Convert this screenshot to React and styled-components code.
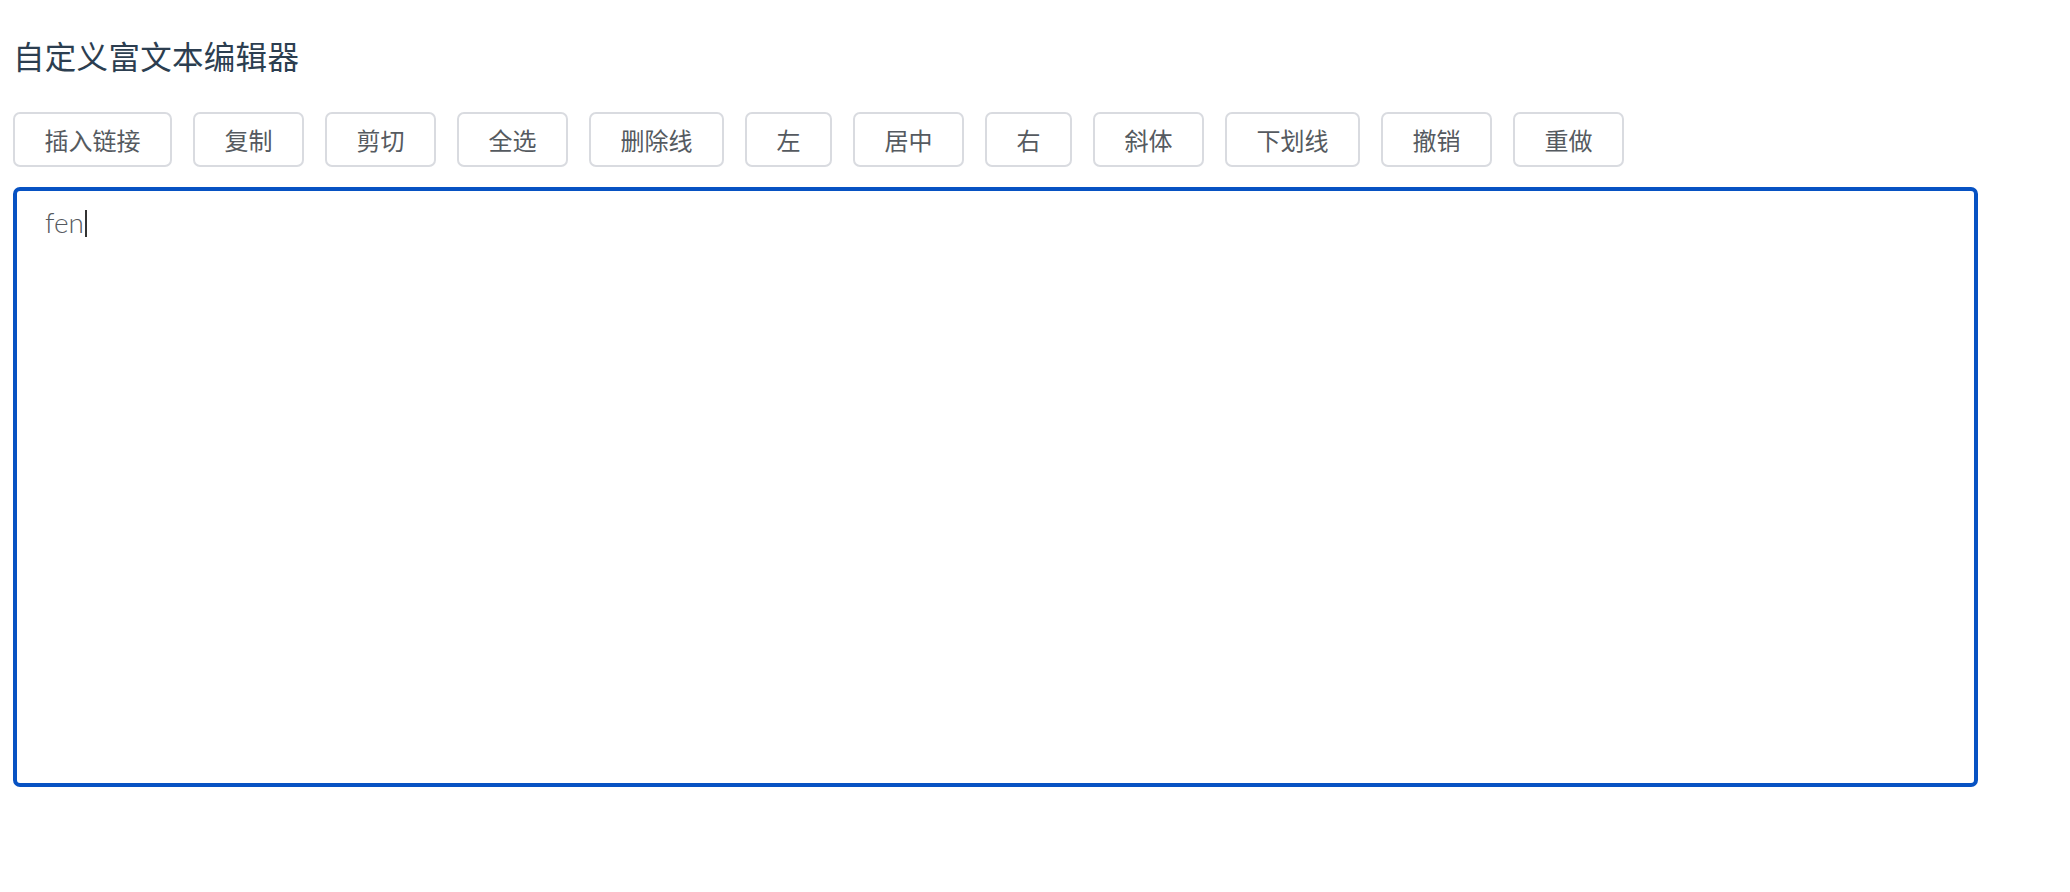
import React from "react";
import styled, { createGlobalStyle } from "styled-components";

const GlobalStyle = createGlobalStyle`
  body {
    margin: 0;
    background: #ffffff;
    font-family: "Lato", "Noto Sans CJK SC", sans-serif;
  }
`;

const actions = [
  "插入链接",
  "复制",
  "剪切",
  "全选",
  "删除线",
  "左",
  "居中",
  "右",
  "斜体",
  "下划线",
  "撤销",
  "重做",
];

const App = () => {
  return (
    <Page>
      <GlobalStyle />
      <Title>自定义富文本编辑器</Title>
      <Toolbar>
        {actions.map((label) => (
          <ToolButton key={label}>{label}</ToolButton>
        ))}
      </Toolbar>
      <Editor>
        <EditorLine>
          fen
          <Caret />
        </EditorLine>
      </Editor>
    </Page>
  );
};

const Page = styled.div`
  padding: 33px 13px 0;
  color: #2c3e50;
`;

const Title = styled.h1`
  margin: 0;
  font-family: "Noto Sans CJK SC", sans-serif;
  font-size: 31.5px;
  font-weight: 400;
  line-height: 44px;
  color: #2c3e50;
  letter-spacing: 0.3px;
`;

const Toolbar = styled.div`
  display: flex;
  gap: 21px;
  margin-top: 35px;
`;

const ToolButton = styled.button`
  box-sizing: border-box;
  height: 55px;
  padding: 0 29.5px;
  border: 2px solid #d9dbe0;
  border-radius: 7px;
  background: #ffffff;
  color: #555a60;
  font-family: "Noto Sans CJK SC", sans-serif;
  font-size: 24px;
  line-height: 1;
  cursor: pointer;
`;

const Editor = styled.div`
  box-sizing: border-box;
  width: 1965px;
  height: 600px;
  margin-top: 20px;
  padding: 16px 28px;
  border: 4px solid #0752c3;
  border-radius: 7px;
  background: #ffffff;
`;

const EditorLine = styled.div`
  display: flex;
  align-items: center;
  font-family: "Lato", sans-serif;
  font-size: 28px;
  font-weight: 300;
  line-height: 30px;
  color: #55595e;
`;

const Caret = styled.span`
  display: inline-block;
  width: 2px;
  height: 27px;
  margin-left: 1px;
  margin-top: 3px;
  background: #333333;
`;

export default App;
